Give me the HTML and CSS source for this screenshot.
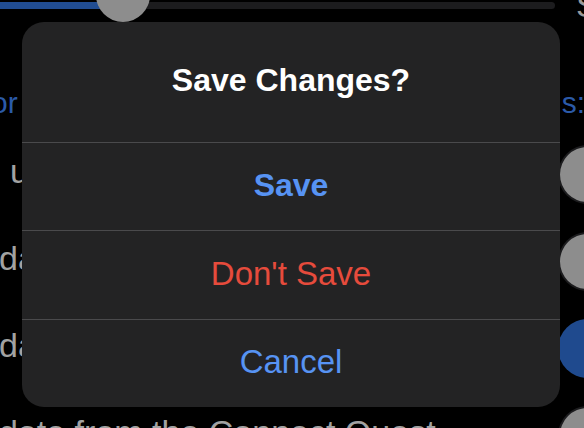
FILE: index.html
```html
<!DOCTYPE html>
<html lang="en">
<head>
<meta charset="utf-8">
<title>Save Changes?</title>
<link rel="stylesheet" href="styles.css">
</head>
<body>
<div class="screen">
  <div class="settings">
    <div class="slider-row">
      <div class="track">
        <div class="track-fill"></div>
        <div class="thumb"></div>
      </div>
      <span class="slider-value">S</span>
    </div>
    <div class="section-header">
      <span class="hdr-left">or</span>
      <span class="hdr-right">s:</span>
    </div>
    <div class="row">
      <span class="label label-first">u</span>
      <span class="toggle"><span class="knob"></span></span>
    </div>
    <div class="row">
      <span class="label">da</span>
      <span class="toggle"><span class="knob"></span></span>
    </div>
    <div class="row">
      <span class="label">da</span>
      <span class="toggle toggle-on"><span class="knob"></span></span>
    </div>
    <div class="row">
      <span class="label">date from the Connect Quest</span>
      <span class="toggle"><span class="knob"></span></span>
    </div>
  </div>

  <div class="alert" role="alertdialog" aria-label="Save Changes?">
    <div class="alert-title">Save Changes?</div>
    <button class="alert-btn btn-save">Save</button>
    <button class="alert-btn btn-destructive">Don't Save</button>
    <button class="alert-btn btn-cancel">Cancel</button>
  </div>
</div>
</body>
</html>
```
FILE: styles.css
```css
html, body {
  margin: 0;
  padding: 0;
  background: #000;
}
body {
  font-family: "Liberation Sans", Arial, sans-serif;
  width: 584px;
  height: 428px;
  overflow: hidden;
}
.screen {
  position: relative;
  width: 584px;
  height: 428px;
  overflow: hidden;
}
.settings {
  display: flex;
  flex-direction: column;
}

/* slider */
.slider-row {
  display: flex;
  align-items: flex-start;
  gap: 21px;
  height: 22px;
}
.track {
  position: relative;
  flex: none;
  width: 555px;
  height: 7px;
  margin-top: 2px;
  background: #1c1c1e;
  border-radius: 0 4px 4px 0;
}
.track-fill {
  width: 100px;
  height: 100%;
  background: #214d92;
}
.thumb {
  position: absolute;
  left: 96px;
  top: -34px;
  width: 54px;
  height: 54px;
  border-radius: 50%;
  background: #8d8d8d;
}
.slider-value {
  flex: none;
  font-size: 34px;
  line-height: 34px;
  margin-top: -12px;
  color: #9a9a9a;
}

/* section header */
.section-header {
  display: flex;
  justify-content: space-between;
  margin-top: 63px;
  height: 36px;
  font-size: 30px;
  line-height: 36px;
  color: #2b5aa8;
}
.hdr-left {
  margin-left: -9px;
}
.hdr-right {
  margin-right: -1px;
}

/* rows */
.row {
  display: flex;
  align-items: center;
  justify-content: space-between;
  height: 87px;
}
.settings .row:first-of-type {
  margin-top: 10px;
}
.section-header + .row {
  margin-top: 10px;
}
.label {
  font-size: 34px;
  line-height: 40px;
  padding-bottom: 8px;
  color: #a2a2a2;
  white-space: nowrap;
  margin-left: -1px;
}
.label-first {
  margin-left: 10px;
}
.toggle {
  flex: none;
  display: flex;
  align-items: center;
  width: 98px;
  height: 59px;
  margin-right: -72px;
  padding: 0 2px;
  box-sizing: border-box;
  border-radius: 30px;
  background: #1c1c1e;
}
.knob {
  width: 55px;
  height: 55px;
  border-radius: 50%;
  background: #8d8d8d;
}
.toggle-on {
  background: #1f4a8e;
  justify-content: flex-end;
}

/* alert */
.alert {
  position: absolute;
  left: 22px;
  top: 22px;
  width: 538px;
  height: 385px;
  border-radius: 22px;
  background: #232324;
  display: flex;
  flex-direction: column;
  overflow: hidden;
}
.alert-title {
  flex: none;
  height: 120px;
  display: flex;
  align-items: center;
  justify-content: center;
  color: #fff;
  font-size: 32px;
  font-weight: bold;
  padding-bottom: 3px;
  box-sizing: border-box;
}
.alert-btn {
  flex: 1;
  display: flex;
  align-items: center;
  justify-content: center;
  border: 0;
  border-top: 1px solid #4a4a4c;
  background: transparent;
  font-family: "Liberation Sans", Arial, sans-serif;
  font-size: 33px;
  padding: 0 0 2px;
  margin: 0;
}
.btn-save {
  color: #5793f3;
  font-weight: bold;
  font-size: 32px;
}
.btn-destructive {
  color: #e64b3c;
}
.btn-cancel {
  color: #5793f3;
}
```
